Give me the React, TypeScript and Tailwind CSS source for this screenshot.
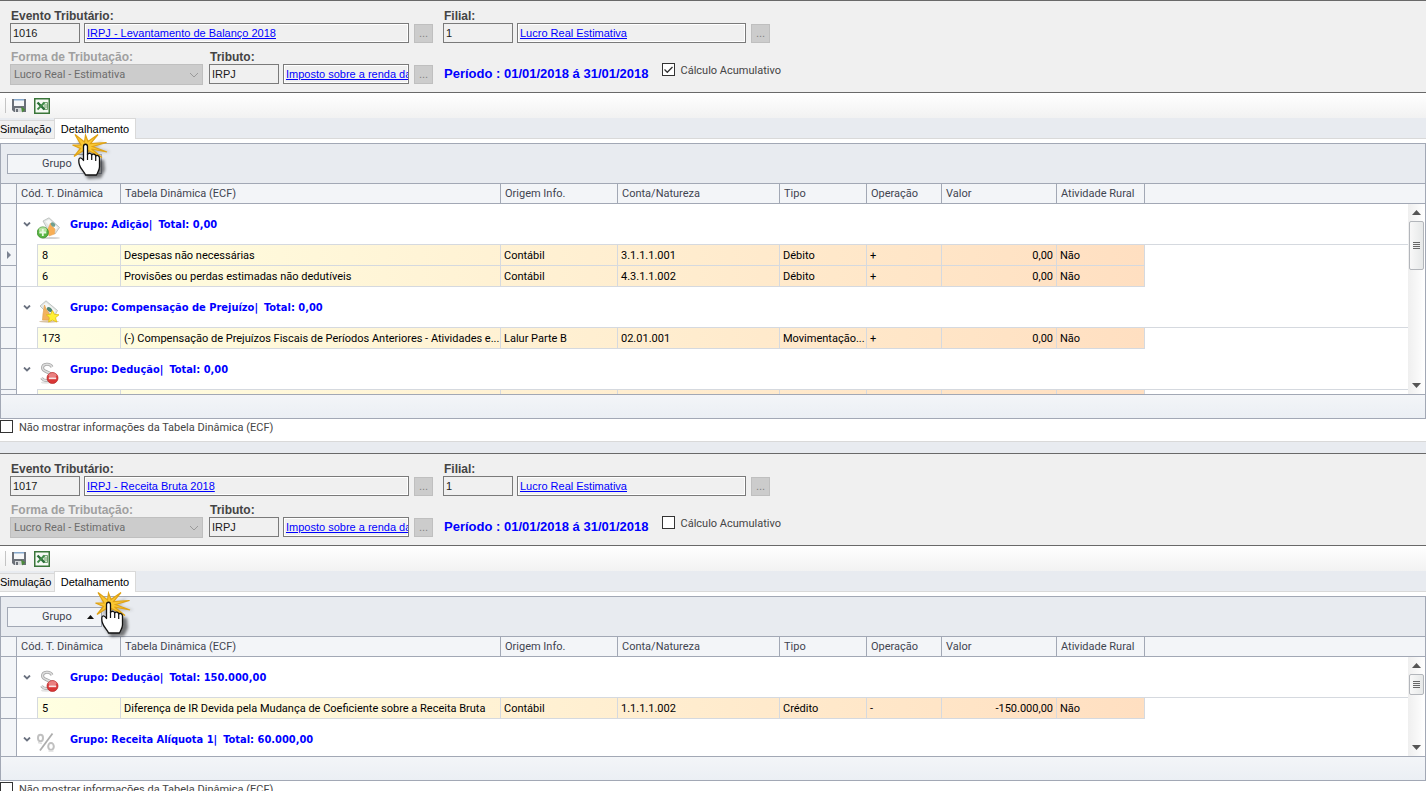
import { useId } from "react";
import type { ReactNode } from "react";

interface Entry {
  code: string;
  table: string;
  origin: string;
  account: string;
  kind: string;
  operation: string;
  value: string;
  rural: string;
}

interface Group {
  title: string;
  total: string;
  icon: ReactNode;
  entries: Entry[];
}

interface PanelProps {
  eventCode: string;
  eventName: string;
  cumulative: boolean;
  groups: Group[];
  bodyClass: string;
  thumbClass: string;
  pointerClass: string;
  sorted?: boolean;
}

const columns = [
  "Tabela Dinâmica (ECF)",
  "Origem Info.",
  "Conta/Natureza",
  "Tipo",
  "Operação",
  "Valor",
  "Atividade Rural",
];

const columnWidths = [
  "w-[16px]",
  "w-[21px]",
  "w-[83px]",
  "w-[380px]",
  "w-[117px]",
  "w-[162px]",
  "w-[87px]",
  "w-[75px]",
  "w-[115px]",
  "w-[88px]",
  "w-auto",
];

/* ---------- icons ---------- */

function AdditionIcon() {
  return (
    <svg viewBox="0 0 24 24" className="size-6">
      <ellipse cx="14" cy="21" rx="9" ry="1" fill="#d2d2d2" />
      <path d="M6 4 L12 .8 L22.500 10.500 L18 17 L11 13 Z" fill="#e4e7e5" stroke="#b3b7b5" strokeWidth=".8" />
      <path d="M8.500 4.500 L12 2.500 L20.500 10.500 L17.500 14.500 Z" fill="#f8f9f8" />
      <path d="M13.500 6 L15 9 L18 12 L17.500 17 L12 19 L10.500 13 Z" fill="#f8ae55" stroke="#e9a75a" strokeWidth=".6" />
      <ellipse cx="16" cy="7.500" rx="2.600" ry="1.800" transform="rotate(40 16 7.500)" fill="#6f9f8f" />
      <circle cx="5.800" cy="15.500" r="5.600" fill="#58b543" stroke="#3b8a2c" strokeWidth=".8" />
      <ellipse cx="5.800" cy="12.800" rx="4" ry="2.600" fill="#c4ecb0" opacity=".85" />
      <path d="M5.800 12v7M2.300 15.500h7" stroke="#e8f8e0" strokeWidth="1.800" />
    </svg>
  );
}

function CompensationIcon() {
  return (
    <svg viewBox="0 0 24 24" className="size-6">
      <ellipse cx="12" cy="21.500" rx="10" ry="1.200" fill="#d8c3a8" />
      <path d="M3 6 L9 .8 L20.500 10.500 L17.500 16 L10 13 Z" fill="#e4e7e5" stroke="#b3b7b5" strokeWidth=".8" />
      <path d="M6 5.500 L9 2.800 L18.500 10.500 L16 14 Z" fill="#f6f7f6" />
      <ellipse cx="12.500" cy="9.500" rx="3" ry="2" transform="rotate(40 12.500 9.500)" fill="#4f8573" />
      <path d="M7.500 5 L9 9 L12 13 L12 20 L5.500 20 L6 14 Z" fill="#f3b25e" stroke="#e2a452" strokeWidth=".7" />
      <path
        d="M15.500 10.500l1.900 3.800 4.600.5-3.500 2.900 1.200 4.300-4.200-2-3.900 2 .9-4.300-3.200-2.900 4.300-.5z"
        fill="#fff035"
        stroke="#dfbd14"
        strokeWidth=".8"
      />
    </svg>
  );
}

function DeductionIcon() {
  return (
    <svg viewBox="0 0 24 24" className="size-6">
      <ellipse cx="9" cy="20.500" rx="5" ry="1.200" fill="#e2e2e2" />
      <path
        d="M15 5 C13 .8 5.500 1.500 5.500 6 C5.500 10.500 15 9.500 15 14.500 C15 19.500 7 19.500 4.500 16"
        fill="none"
        stroke="#a6a6a6"
        strokeWidth="3"
      />
      <path
        d="M15 5 C13 .8 5.500 1.500 5.500 6 C5.500 10.500 15 9.500 15 14.500 C15 19.500 7 19.500 4.500 16"
        fill="none"
        stroke="#dedede"
        strokeWidth="1.400"
      />
      <circle cx="15.500" cy="16" r="5.500" fill="#d93636" stroke="#b52424" strokeWidth=".7" />
      <ellipse cx="15.500" cy="13.300" rx="4" ry="2.200" fill="#f0a0a0" opacity=".7" />
      <path d="M11.800 16.300h7.400" stroke="#f8e4e4" strokeWidth="1.800" />
    </svg>
  );
}

function PercentIcon() {
  return (
    <svg viewBox="0 0 24 24" className="size-6">
      <g fill="none" stroke="#c0c0c0" strokeWidth="2">
        <ellipse cx="3.500" cy="6" rx="2.500" ry="3.200" />
        <ellipse cx="14" cy="14.500" rx="2.800" ry="3.400" />
      </g>
      <path d="M15.500 1.500 L3 18.500" stroke="#adadad" strokeWidth="1.800" />
      <path d="M1 10.500 L5 11.500M11.500 19 L16.500 19" stroke="#dedede" strokeWidth="1.400" />
    </svg>
  );
}

function SaveIcon() {
  return (
    <svg viewBox="0 0 16 16" className="size-4">
      <path d="M1 1h14v13H3l-2-2z" fill="#6b7078" />
      <path d="M3 2h10v6H3z" fill="#f6f7f8" />
      <path d="M3 1h10v1.500H3z" fill="#86a8cc" />
      <path d="M4 10h7v4H4z" fill="#d5d8da" />
      <path d="M5 11h2v3H5z" fill="#6b7078" />
      <path d="M10 8.500l4.500 3-3.500 3z" fill="#4c8a3c" />
    </svg>
  );
}

function ExcelIcon() {
  return (
    <svg viewBox="0 0 16 16" className="size-4">
      <path d="M0 0h16v16H0z" fill="#3a763a" />
      <path d="M1.500 1.500h13v13h-13z" fill="#f6faf5" />
      <path d="M8 4h5.500v7.500H8z" fill="#dcebd8" />
      <path d="M9.500 4.500h4v7h-4M10 7h3.500M10 9h3.500" fill="none" stroke="#5a935a" strokeWidth=".8" />
      <path d="M3.500 4.500l7 7" stroke="#2a6f38" strokeWidth="2.400" />
      <path d="M10.500 4.500l-7 7" stroke="#3f8a48" strokeWidth="1.800" />
    </svg>
  );
}

function ClickPointer({ className }: { className: string }) {
  const id = useId();
  return (
    <svg
      viewBox="0 0 44 52"
      className={`pointer-events-none absolute z-10 h-[52px] w-[44px] ${className}`}
      aria-hidden="true"
    >
      <defs>
        <filter id={id} x="-30%" y="-30%" width="160%" height="160%">
          <feGaussianBlur stdDeviation="1.600" />
        </filter>
      </defs>
      <g filter={`url(#${id})`} fill="#000" opacity=".5">
        <path d="M19 18 L22 28 L34 29 L35 39 L31 47 L18 48 L11 37 Z" />
        <path d="M8 8 L19 15 L34 9 L27 17 L41 21 L26 22 L32 30 L10 26 Z" opacity=".4" />
      </g>
      <path
        d="M5 3.500 L14.500 11 L15.500 4 L18 10.500 L28 3.500 L20.500 12.500 L36.500 11.500 L22.500 15.500 L37 21 L21.500 18 L32 26.500 L18.500 19.500 L17 24 L13.500 19.500 L4 25.500 L10.500 17.500 L2.500 14 L11 14 Z"
        fill="#f9c733"
        stroke="#e0a316"
        strokeWidth="1.200"
      />
      <path
        d="M13.500 15.500 C13.500 12.500 17.500 12.500 17.500 15.500 V23.500 C18 21.800 21.500 21.900 21.700 24 C22.500 22.500 25.500 22.800 25.700 25 C26.800 23.800 29.500 24.300 29.500 27 V36 C29.500 39 27.500 41.500 26.500 44 H15.500 C14.500 41 10.500 38 9.500 34 C8.500 31 8.500 27.500 9.800 27 C11.500 26.500 12.500 28 13.500 29.500 Z"
        fill="#fff"
        stroke="#111"
        strokeWidth="1.300"
        strokeLinejoin="round"
      />
      <path d="M17.500 23v6M21.700 24v5M25.700 25v5" stroke="#111" strokeWidth="1.200" />
    </svg>
  );
}

/* ---------- form ---------- */

const labelClass = "block h-[14px] pl-px text-[12px] leading-[14px] font-bold whitespace-nowrap";
const inputClass =
  "h-[20px] border border-[#7a7a7a] bg-[#f0f0f0] px-[2px] text-[11px] leading-[16px] text-[#1a1a1a] outline-none";

function LookupButton({ label }: { label: string }) {
  return (
    <button
      type="button"
      aria-label={label}
      className="h-[19px] w-[19px] shrink-0 border border-[#bfbfbf] bg-[#cccccc] text-[11px] leading-[16px] text-[#838383]"
    >
      ...
    </button>
  );
}

function LinkField({ text, className }: { text: string; className: string }) {
  return (
    <div
      className={`h-[20px] overflow-hidden border border-[#7a7a7a] bg-[#f0f0f0] px-[2px] text-[11px] leading-[18px] whitespace-nowrap ring-1 ring-white ring-inset ${className}`}
    >
      <a href="#" className="text-[#0000ff] underline">
        {text}
      </a>
    </div>
  );
}

function CheckBox({ label, checked }: { label: string; checked: boolean }) {
  const id = useId();
  return (
    <div className="flex items-start gap-[6px]">
      <div className="grid">
        <input
          id={id}
          type="checkbox"
          defaultChecked={checked}
          className="peer col-start-1 row-start-1 size-[13px] appearance-none border border-[#333] bg-white"
        />
        <svg
          viewBox="0 0 13 13"
          className="pointer-events-none col-start-1 row-start-1 hidden size-[13px] peer-checked:block"
        >
          <path d="M2.500 6.500l2.800 2.800 5.200-5.300" fill="none" stroke="#333" strokeWidth="1.300" />
        </svg>
      </div>
      <label htmlFor={id} className="font-[Roboto,sans-serif] text-[11px] leading-[16px] text-[#444]">
        {label}
      </label>
    </div>
  );
}

function EventForm({ eventCode, eventName, cumulative }: Pick<PanelProps, "eventCode" | "eventName" | "cumulative">) {
  const id = useId();
  return (
    <form className="flex h-[93px] flex-col gap-[7px] border-y border-[#696969] bg-[#f0f0f0] pt-[8px] pl-[10px] text-[#444]">
      <div className="flex gap-[10px]">
        <div className="w-[423px]">
          <label htmlFor={`${id}-event`} className={labelClass}>
            Evento Tributário:
          </label>
          <div className="flex items-center">
            <input id={`${id}-event`} readOnly defaultValue={eventCode} className={`${inputClass} mr-[4px] w-[70px]`} />
            <LinkField text={eventName} className="mr-[5px] w-[325px]" />
            <LookupButton label="Buscar evento" />
          </div>
        </div>
        <div>
          <label htmlFor={`${id}-branch`} className={labelClass}>
            Filial:
          </label>
          <div className="flex items-center">
            <input id={`${id}-branch`} readOnly defaultValue="1" className={`${inputClass} mr-[4px] w-[70px]`} />
            <LinkField text="Lucro Real Estimativa" className="mr-[5px] w-[229px]" />
            <LookupButton label="Buscar filial" />
          </div>
        </div>
      </div>
      <div className="flex">
        <div className="mr-[6px] w-[193px]">
          <label htmlFor={`${id}-form`} className={`${labelClass} text-[#a0a0a0]`}>
            Forma de Tributação:
          </label>
          <div className="grid items-center">
            <select
              id={`${id}-form`}
              disabled
              className="col-start-1 row-start-1 h-[21px] w-full appearance-none border border-[#bfbfbf] bg-[#cccccc] px-[3px] pt-[2px] font-[Roboto,sans-serif] text-[11px] text-[#6d6d6d] opacity-100"
            >
              <option>Lucro Real - Estimativa</option>
            </select>
            <svg viewBox="0 0 10 6" className="col-start-1 row-start-1 mr-[4px] h-[6px] w-[10px] justify-self-end">
              <path d="M1 1l4 4 4-4" fill="none" stroke="#9a9a9a" />
            </svg>
          </div>
        </div>
        <div className="mr-[11px]">
          <label htmlFor={`${id}-tax`} className={labelClass}>
            Tributo:
          </label>
          <div className="flex items-center">
            <input id={`${id}-tax`} readOnly defaultValue="IRPJ" className={`${inputClass} mr-[4px] w-[70px]`} />
            <LinkField text="Imposto sobre a renda da" className="mr-[5px] w-[126px]" />
            <LookupButton label="Buscar tributo" />
          </div>
        </div>
        <p className="mr-[13px] pt-[16px] text-[13px] leading-[16px] font-bold whitespace-nowrap text-[#0000ff]">
          Período : 01/01/2018 á 31/01/2018
        </p>
        <div className="pt-[13px]">
          <CheckBox label="Cálculo Acumulativo" checked={cumulative} />
        </div>
      </div>
    </form>
  );
}

/* ---------- grid ---------- */

const markerCell = "border-r border-b border-[#a2a8b5] bg-[#f3f5f8] p-0";
const headCell =
  "h-[20px] border-r border-b border-[#a2a8b5] bg-[#f3f5f8] px-[4px] py-0 text-left font-normal text-[#3f4450]";
const dataCell = "h-[21px] border-r border-b border-[#d5d9df] px-[3px] pt-px pb-0";

function GroupRows({ group, current }: { group: Group; current: boolean }) {
  return (
    <tbody>
      <tr>
        <td className={markerCell} />
        <td colSpan={10} className="h-[41px] p-0">
          <div className="flex h-[41px]">
            <div className="w-[20px] pt-[18px] pl-[6px]">
              <svg viewBox="0 0 8 5" className="h-[5px] w-[8px]">
                <path d="M1 .5l3 3 3-3" fill="none" stroke="#6b7280" strokeWidth="1.800" />
              </svg>
            </div>
            <div className="flex flex-1 border-b border-[#d5d9df]">
              <div className="w-[33px] pt-[13px]">{group.icon}</div>
              <div className="flex gap-[6px] pt-[13px] font-['DejaVu_Sans_Condensed','DejaVu_Sans',sans-serif] leading-[16px] font-bold text-[#0000ff]">
                <span>Grupo: {group.title}|</span>
                <span>Total: {group.total}</span>
              </div>
            </div>
          </div>
        </td>
      </tr>
      {group.entries.map((entry, index) => (
        <tr
          key={index}
          className="bg-[linear-gradient(90deg,#ffffe1_37px,#ffdfc1_1144px)] text-black"
        >
          <td className={markerCell}>
            {current && index === 0 && (
              <svg viewBox="0 0 4 8" className="mx-auto h-[8px] w-[4px]">
                <path d="M0 0l4 4-4 4z" fill="#7b8291" />
              </svg>
            )}
          </td>
          <td
            className={`border-r border-[#d5d9df] bg-white p-0 ${index === group.entries.length - 1 ? "border-b" : ""}`}
          />
          <td className={`${dataCell} pl-[4px]`}>{entry.code}</td>
          <td className={dataCell}>{entry.table}</td>
          <td className={dataCell}>{entry.origin}</td>
          <td className={dataCell}>{entry.account}</td>
          <td className={dataCell}>{entry.kind}</td>
          <td className={dataCell}>{entry.operation}</td>
          <td className={`${dataCell} text-right`}>{entry.value}</td>
          <td className={dataCell}>{entry.rural}</td>
          <td className="bg-white p-0" />
        </tr>
      ))}
    </tbody>
  );
}

function ScrollBar({ thumbClass }: { thumbClass: string }) {
  return (
    <div className="absolute top-[20px] right-0 bottom-0 flex w-[17px] flex-col items-center bg-linear-to-r from-[#efefef] to-white">
      <svg viewBox="0 0 9 5" className="mt-[6px] mb-[6px] h-[5px] w-[9px] shrink-0">
        <path d="M0 5L4.500 0 9 5z" fill="#555" />
      </svg>
      <div
        className={`flex w-[15px] shrink-0 flex-col items-center justify-center gap-px rounded-[2px] border border-[#b3b6bb] bg-linear-to-r from-[#f8f8f8] to-[#e6e8e8] ${thumbClass}`}
      >
        <span className="h-px w-[7px] bg-[#666]" />
        <span className="h-px w-[7px] bg-[#666]" />
        <span className="h-px w-[7px] bg-[#666]" />
        <span className="h-px w-[7px] bg-[#666]" />
      </div>
      <svg viewBox="0 0 9 5" className="mt-auto mb-[6px] h-[5px] w-[9px] shrink-0">
        <path d="M0 0l4.500 5L9 0z" fill="#555" />
      </svg>
    </div>
  );
}

function DetailGrid({ groups, bodyClass, thumbClass, sorted }: Pick<PanelProps, "groups" | "bodyClass" | "thumbClass" | "sorted">) {
  return (
    <div className="border border-[#a2a8b5] font-[Roboto,sans-serif] text-[11px] leading-[14px]">
      <div className="h-[40px] border-b border-[#a2a8b5] bg-[#e8ebf0] pt-[10px] pl-[6px]">
        <button
          type="button"
          className="flex h-[20px] w-[95px] items-center justify-between border border-[#a2a8b5] bg-[#f3f5f8] pr-[7px] pl-[34px] text-[#3f4450]"
        >
          Grupo
          {sorted && (
            <svg viewBox="0 0 7 4" className="h-[4px] w-[7px]">
              <path d="M0 4L3.500 0 7 4z" fill="#111" />
            </svg>
          )}
        </button>
      </div>
      <div className={`relative overflow-hidden bg-white ${bodyClass}`}>
        <table className="w-full table-fixed border-separate border-spacing-0 whitespace-nowrap">
          <colgroup>
            {columnWidths.map((width, index) => (
              <col key={index} className={width} />
            ))}
          </colgroup>
          <thead>
            <tr>
              <td className={markerCell} />
              <th colSpan={2} className={headCell}>
                Cód. T. Dinâmica
              </th>
              {columns.map((column) => (
                <th key={column} className={headCell}>
                  {column}
                </th>
              ))}
              <td className="border-b border-[#a2a8b5] bg-[#f3f5f8] p-0" />
            </tr>
          </thead>
          {groups.map((group, index) => (
            <GroupRows key={group.title} group={group} current={index === 0 && !sorted} />
          ))}
        </table>
        <ScrollBar thumbClass={thumbClass} />
      </div>
      <div className="h-[24px] border-t border-[#a2a8b5] bg-linear-to-b from-[#f3f5f8] to-[#ebeff4]" />
    </div>
  );
}

function Panel({ eventCode, eventName, cumulative, groups, bodyClass, thumbClass, pointerClass, sorted }: PanelProps) {
  return (
    <section className="relative shrink-0 bg-white">
      <EventForm eventCode={eventCode} eventName={eventName} cumulative={cumulative} />
      <div className="flex h-[25px] items-center bg-linear-to-b from-white to-[#f2f2f2] pl-[5px]">
        <span className="mr-[5px] h-[15px] w-px bg-[#c4c4c4]" />
        <button type="button" aria-label="Salvar" className="mr-[7px]">
          <SaveIcon />
        </button>
        <button type="button" aria-label="Exportar para Excel">
          <ExcelIcon />
        </button>
      </div>
      <div className="mb-[4px] flex h-[21px] items-end bg-[#e8ebf0] text-[11px] text-black">
        <button
          type="button"
          className="h-[19px] w-[54px] border-y border-[#d9d9d9] bg-[#f0f0f0] text-left leading-[17px]"
        >
          Simulação
        </button>
        <button
          type="button"
          className="h-[21px] w-[82px] border border-b-0 border-[#d9d9d9] bg-white text-center leading-[18px]"
        >
          Detalhamento
        </button>
        <div className="h-full flex-1 border-b border-[#d9d9d9]" />
      </div>
      <DetailGrid groups={groups} bodyClass={bodyClass} thumbClass={thumbClass} sorted={sorted} />
      <div className="flex h-[23px] items-start border-b border-[#d9d9d9] pt-px">
        <CheckBox label="Não mostrar informações da Tabela Dinâmica (ECF)" checked={false} />
      </div>
      <ClickPointer className={pointerClass} />
    </section>
  );
}

/* ---------- data ---------- */

const balanceGroups: Group[] = [
  {
    title: "Adição",
    total: "0,00",
    icon: <AdditionIcon />,
    entries: [
      { code: "8", table: "Despesas não necessárias", origin: "Contábil", account: "3.1.1.1.001", kind: "Débito", operation: "+", value: "0,00", rural: "Não" },
      { code: "6", table: "Provisões ou perdas estimadas não dedutíveis", origin: "Contábil", account: "4.3.1.1.002", kind: "Débito", operation: "+", value: "0,00", rural: "Não" },
    ],
  },
  {
    title: "Compensação de Prejuízo",
    total: "0,00",
    icon: <CompensationIcon />,
    entries: [
      { code: "173", table: "(-) Compensação de Prejuízos Fiscais de Períodos Anteriores - Atividades e...", origin: "Lalur Parte B", account: "02.01.001", kind: "Movimentação...", operation: "+", value: "0,00", rural: "Não" },
    ],
  },
  {
    title: "Dedução",
    total: "0,00",
    icon: <DeductionIcon />,
    entries: [{ code: "", table: "", origin: "", account: "", kind: "", operation: "", value: "", rural: "" }],
  },
];

const revenueGroups: Group[] = [
  {
    title: "Dedução",
    total: "150.000,00",
    icon: <DeductionIcon />,
    entries: [
      { code: "5", table: "Diferença de IR Devida pela Mudança de Coeficiente sobre a Receita Bruta", origin: "Contábil", account: "1.1.1.1.002", kind: "Crédito", operation: "-", value: "-150.000,00", rural: "Não" },
    ],
  },
  { title: "Receita Alíquota 1", total: "60.000,00", icon: <PercentIcon />, entries: [] },
];

export default function App() {
  return (
    <main className="flex h-screen flex-col gap-[11px] overflow-hidden bg-[#e8ebf0] font-['Liberation_Sans',Arial,sans-serif]">
      <Panel
        eventCode="1016"
        eventName="IRPJ - Levantamento de Balanço 2018"
        cumulative
        groups={balanceGroups}
        bodyClass="h-[210px]"
        thumbClass="h-[49px]"
        pointerClass="top-[131px] left-[70px]"
      />
      <Panel
        eventCode="1017"
        eventName="IRPJ - Receita Bruta 2018"
        cumulative={false}
        groups={revenueGroups}
        bodyClass="h-[119px]"
        thumbClass="h-[21px]"
        pointerClass="top-[136px] left-[93px]"
        sorted
      />
    </main>
  );
}
